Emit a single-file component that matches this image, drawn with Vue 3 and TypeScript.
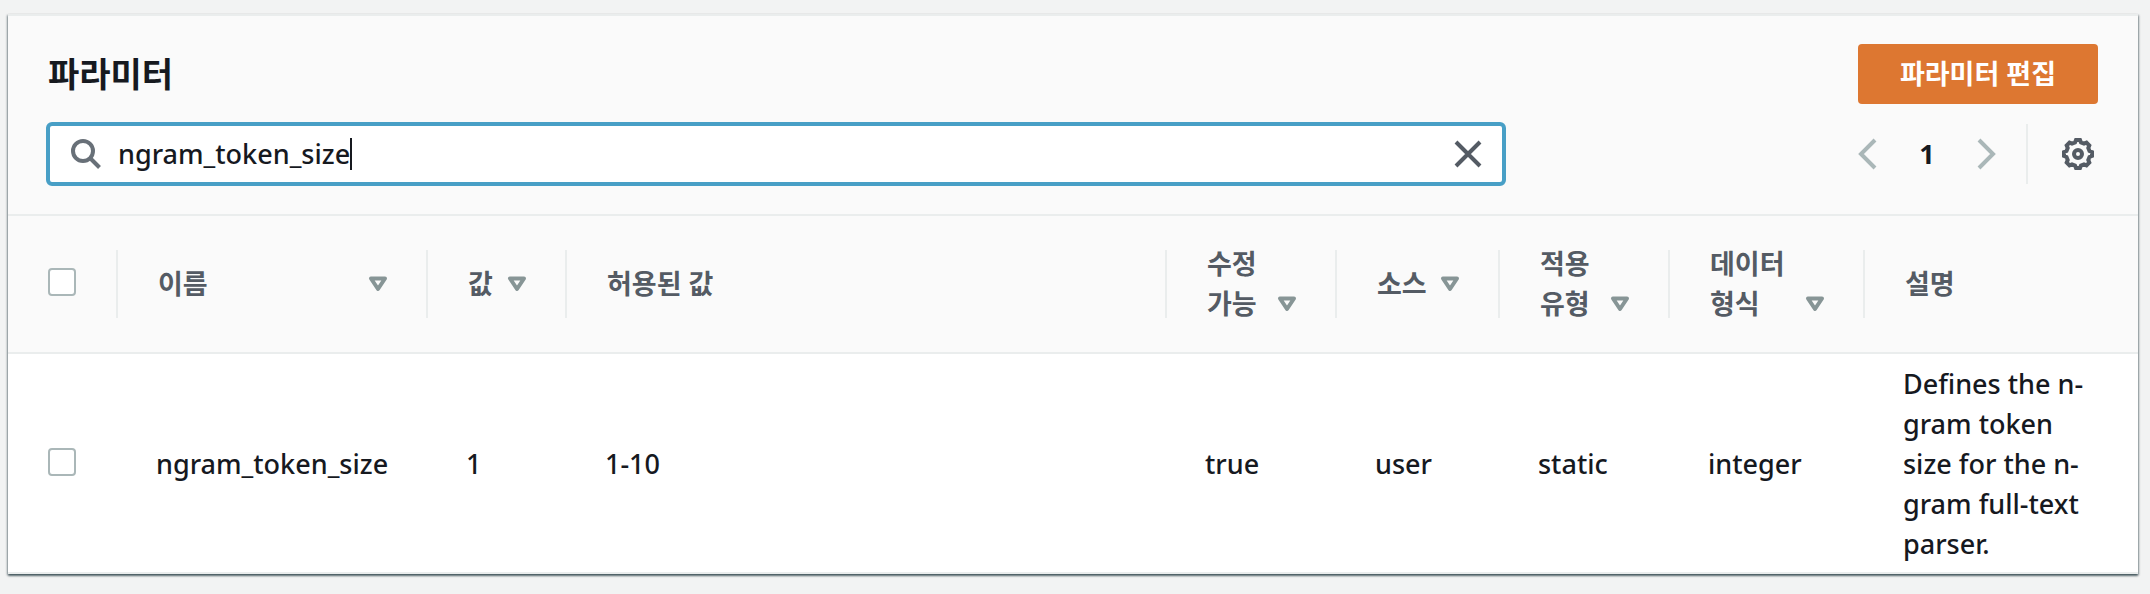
<script setup lang="ts">
import { computed, ref } from 'vue'

interface Column {
  key: string
  lines: string[]
  sortable: boolean
}

interface Parameter {
  name: string
  value: string
  allowed: string
  modifiable: string
  source: string
  applyType: string
  dataType: string
  description: string
}

const columns: Column[] = [
  { key: 'name', lines: ['이름'], sortable: true },
  { key: 'value', lines: ['값'], sortable: true },
  { key: 'allowed', lines: ['허용된 값'], sortable: false },
  { key: 'modifiable', lines: ['수정', '가능'], sortable: true },
  { key: 'source', lines: ['소스'], sortable: true },
  { key: 'applyType', lines: ['적용', '유형'], sortable: true },
  { key: 'dataType', lines: ['데이터', '형식'], sortable: true },
  { key: 'description', lines: ['설명'], sortable: false },
]

const parameters: Parameter[] = [
  {
    name: 'ngram_token_size',
    value: '1',
    allowed: '1-10',
    modifiable: 'true',
    source: 'user',
    applyType: 'static',
    dataType: 'integer',
    description: 'Defines the n-gram token size for the n-gram full-text parser.',
  },
]

const query = ref('ngram_token_size')
const selected = ref<string[]>([])

const visible = computed(() => parameters.filter((p) => p.name.includes(query.value)))
const allSelected = computed({
  get: () => visible.value.length > 0 && selected.value.length === visible.value.length,
  set: (on: boolean) => {
    selected.value = on ? visible.value.map((p) => p.name) : []
  },
})
</script>

<template>
  <main class="page">
    <section class="card">
      <header class="toolbar">
        <div class="title-row">
          <h2 class="title">파라미터</h2>
          <button type="button" class="primary">파라미터 편집</button>
        </div>
        <div class="filter-row">
          <div class="search">
            <label class="search-field">
              <svg class="search-icon" viewBox="0 0 32 32" aria-hidden="true">
                <circle cx="13" cy="13" r="10" />
                <path d="M20 20l9.500 9.500" />
              </svg>
              <input v-model="query" class="search-input" type="text" aria-label="파라미터 필터" />
              <span class="caret"></span>
            </label>
            <button type="button" class="icon-button clear" aria-label="지우기" @click="query = ''">
              <svg viewBox="0 0 32 32" aria-hidden="true"><path d="M4 4l24 24M28 4L4 28" /></svg>
            </button>
          </div>
          <div class="tools">
            <nav class="pager" aria-label="페이지">
              <button type="button" class="icon-button arrow" aria-label="이전">
                <svg viewBox="0 0 20 32" aria-hidden="true"><path d="M17 2L3 16l14 14" /></svg>
              </button>
              <button type="button" class="page-number">1</button>
              <button type="button" class="icon-button arrow" aria-label="다음">
                <svg viewBox="0 0 20 32" aria-hidden="true"><path d="M3 2l14 14L3 30" /></svg>
              </button>
            </nav>
            <button type="button" class="icon-button settings" aria-label="설정">
              <svg viewBox="0 0 32 32" aria-hidden="true">
                <path
                  d="M14 2H18L19 4.500L22 5.700L24.500 4.700L27.300 7.500L26.300 10L27.500 13L30 14V18L27.500 19L26.300 22L27.300 24.500L24.500 27.300L22 26.300L19 27.500L18 30H14L13 27.500L10 26.300L7.500 27.300L4.700 24.500L5.700 22L4.500 19L2 18V14L4.500 13L5.700 10L4.700 7.500L7.500 4.700L10 5.700L13 4.500Z"
                />
                <circle cx="16" cy="16" r="4" />
              </svg>
            </button>
          </div>
        </div>
      </header>

      <table class="grid">
        <colgroup>
          <col class="col-select" />
          <col v-for="c in columns" :key="c.key" :class="'col-' + c.key" />
        </colgroup>
        <thead>
          <tr>
            <th scope="col" class="select">
              <input v-model="allSelected" type="checkbox" class="check" aria-label="모두 선택" />
            </th>
            <th v-for="c in columns" :key="c.key" scope="col">
              <div class="head">
                <span class="head-text">
                  <span v-for="line in c.lines" :key="line" class="head-line">{{ line }}</span>
                </span>
                <button v-if="c.sortable" type="button" class="icon-button sort" :aria-label="c.lines.join(' ') + ' 정렬'">
                  <svg viewBox="0 0 20 16" aria-hidden="true"><path d="M3 2.500h14L10 13z" /></svg>
                </button>
              </div>
            </th>
          </tr>
        </thead>
        <tbody>
          <tr v-for="p in visible" :key="p.name">
            <td class="select">
              <input v-model="selected" type="checkbox" class="check" :value="p.name" :aria-label="p.name" />
            </td>
            <td>{{ p.name }}</td>
            <td>{{ p.value }}</td>
            <td>{{ p.allowed }}</td>
            <td>{{ p.modifiable }}</td>
            <td>{{ p.source }}</td>
            <td>{{ p.applyType }}</td>
            <td>{{ p.dataType }}</td>
            <td class="description">{{ p.description }}</td>
          </tr>
        </tbody>
      </table>
    </section>
  </main>
</template>

<style>
body {
  margin: 0;
  background: #f2f3f3;
}
</style>

<style scoped>
.page {
  padding: 14px 12px 20px 8px;
  color: #16191f;
  font-family: 'Noto Sans', 'Noto Sans CJK KR', sans-serif;
  font-size: 27px;
  font-weight: 500;
  line-height: 40px;
}

.card {
  background: #fff;
  border-top: 2px solid #eaeded;
  box-shadow: 0 2px 2px 0 rgba(0, 28, 36, 0.5), 1px 1px 2px 0 rgba(0, 28, 36, 0.3), -1px 1px 2px 0 rgba(0, 28, 36, 0.3);
}

.toolbar {
  display: flex;
  flex-direction: column;
  gap: 18px;
  padding: 28px 40px;
  background: #fafafa;
  border-bottom: 2px solid #eaeded;
}

.title-row,
.filter-row {
  display: flex;
  align-items: center;
  justify-content: space-between;
}

.title {
  margin: 0;
  font-size: 34px;
  font-weight: 700;
}

button {
  margin: 0;
  border: 0;
  font: inherit;
  color: inherit;
  background: none;
  cursor: pointer;
}

.primary {
  padding: 10px 42px;
  border-radius: 4px;
  background: #dd7731;
  color: #fff;
  font-weight: 700;
}

.search {
  box-sizing: border-box;
  display: flex;
  align-items: center;
  flex: 0 1 1460px;
  height: 64px;
  margin-left: -2px;
  padding: 0 18px 0 20px;
  border: 4px solid #489fc6;
  border-radius: 6px;
  background: #fff;
}

.search-field {
  display: flex;
  flex: 1;
  align-items: center;
  cursor: text;
}

.search-icon {
  width: 32px;
  height: 32px;
  margin-right: 16px;
  fill: none;
  stroke: #687078;
  stroke-width: 4;
}

.search-input {
  field-sizing: content;
  padding: 0;
  border: 0;
  outline: 0;
  background: none;
  color: inherit;
  font: inherit;
  caret-color: transparent;
}

.caret {
  width: 2px;
  height: 32px;
  background: #16191f;
}

.icon-button {
  display: flex;
  padding: 0;
  fill: none;
  stroke: #545b64;
}

.clear svg,
.settings svg {
  width: 32px;
  height: 32px;
  stroke-width: 4;
}

.tools,
.pager {
  display: flex;
  align-items: center;
}

.pager {
  height: 60px;
  padding-right: 30px;
  border-right: 2px solid #eaeded;
}

.arrow {
  stroke: #aab7b8;
  stroke-width: 4;
}

.arrow svg {
  width: 20px;
  height: 32px;
}

.page-number {
  width: 98px;
  padding: 0;
  font-weight: 700;
}

.settings {
  margin: 0 4px 0 34px;
}

.grid {
  width: 100%;
  border-collapse: collapse;
  table-layout: fixed;
}

.col-select {
  width: 110px;
}
.col-name {
  width: 310px;
}
.col-value {
  width: 139px;
}
.col-modifiable,
.col-applyType {
  width: 170px;
}
.col-source {
  width: 163px;
}
.col-dataType {
  width: 195px;
}
.col-description {
  width: 273px;
}

th,
td {
  text-align: left;
  vertical-align: middle;
}

th {
  padding: 28px 40px;
  border-bottom: 2px solid #eaeded;
  background: linear-gradient(#eaeded, #eaeded) right center / 2px 68px no-repeat #fafafa;
  color: #545b64;
  font-weight: 700;
}

th:last-child {
  background: #fafafa;
}

td {
  padding: 10px 32px 8px 38px;
  border-bottom: 2px solid #eaeded;
}

.description {
  padding-right: 40px;
}

.select {
  padding-left: 40px;
  padding-right: 0;
}

.head {
  display: flex;
  align-items: flex-end;
  justify-content: space-between;
}

.head-line {
  display: block;
  white-space: nowrap;
}

.sort {
  height: 40px;
  align-items: center;
  stroke: #879596;
  stroke-width: 4;
  stroke-linejoin: round;
}

.sort svg {
  width: 20px;
  height: 16px;
}

.check {
  display: block;
  appearance: none;
  box-sizing: border-box;
  width: 28px;
  height: 28px;
  margin: 0 0 4px;
  border: 2px solid #aab7b8;
  border-radius: 4px;
  background: #fff;
}

.check:checked {
  background: #0073bb;
  border-color: #0073bb;
}
</style>
